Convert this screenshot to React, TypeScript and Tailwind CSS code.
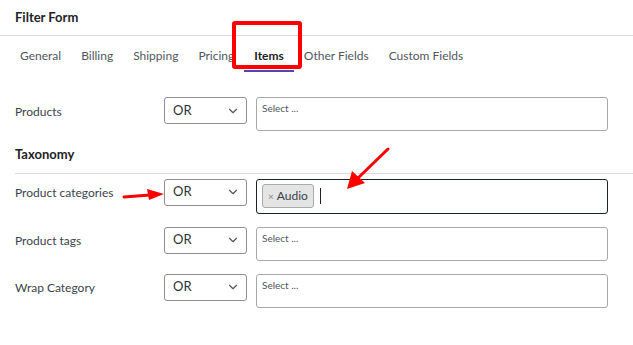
import { ChevronDown } from "lucide-react";

const tabs = ["General", "Billing", "Shipping", "Pricing", "Items", "Other Fields", "Custom Fields"];

const OrSelect = () => (
  <div className="w-[83px] h-[27px] shrink-0 border border-[#8c8f94] rounded-[3px] flex items-center justify-between pl-[8px] pr-[6px] text-[13px] text-[#2c3338]">
    <span>OR</span>
    <ChevronDown className="w-[14px] h-[14px] text-[#50575e]" strokeWidth={2} />
  </div>
);

const Row = ({ label, children, focused }: { label: string; children?: React.ReactNode; focused?: boolean }) => (
  <div className="flex items-start">
    <div className="w-[149px] shrink-0 h-[27px] pt-[2px] flex items-center text-[12px] text-[#3c434a]">{label}</div>
    <OrSelect />
    <div
      className={
        focused
          ? "ml-[9px] w-[352px] h-[35px] border-[1.5px] border-[#1d2327] rounded-[3px] flex items-center px-[5px]"
          : "ml-[9px] w-[352px] h-[34px] border border-[#a7aaad] rounded-[3px] px-[5px] pt-[3px] text-[10px] text-[#50575e]"
      }
    >
      {children ?? "Select ..."}
    </div>
  </div>
);

export default function App() {
  return (
    <div className="relative w-[633px] h-[345px] bg-white overflow-hidden font-['Lato',sans-serif]">
      <div className="h-[36px] border-b border-[#dcdcde] flex items-center px-[15px] text-[13px] font-bold text-[#1d2327]">
        Filter Form
      </div>

      <nav className="flex pl-[20px] gap-[20px] h-[36px] pt-[4px] items-center text-[12px] text-[#50575e]">
        {tabs.map((t) => (
          <div key={t} className={t === "Items" ? "relative flex items-center text-[#1d2327] font-bold" : "flex items-center"}>
            {t}
            {t === "Items" && <span className="absolute left-[-10px] right-[-10px] top-[23px] h-[2px] bg-[#5b3fb5]" />}
          </div>
        ))}
      </nav>

      <div className="px-[15px] pt-[25px] flex flex-col">
        <Row label="Products" />
        <div className="mt-[14px] pb-[8px] border-b border-[#dcdcde] mr-[-15px] text-[13px] font-bold text-[#1d2327]">Taxonomy</div>
        <div className="mt-[5px] flex flex-col gap-[13px]">
          <Row label="Product categories" focused>
            <div className="h-[24px] px-[5px] bg-[#e4e4e4] border border-[#aaa] rounded-[3px] flex items-center text-[12px] text-[#3c434a]">
              <span className="text-[#888] text-[10px] mr-[3px]">×</span>Audio
            </div>
            <span className="ml-[6px] w-px h-[16px] bg-[#1d2327]" />
          </Row>
          <Row label="Product tags" />
          <Row label="Wrap Category" />
        </div>
      </div>

      {/* annotation overlay */}
      <div className="absolute left-[232px] top-[21px] w-[70px] h-[48px] border-[4px] border-[#ff0000] rounded-[3px]" />
      <svg className="absolute left-0 top-0 pointer-events-none" width="633" height="345">
        <line x1="124" y1="197" x2="150" y2="195" stroke="#f00" strokeWidth="3" strokeLinecap="round" />
        <polygon points="164,194 147,189 149,200" fill="#f00" />
        <line x1="388" y1="149" x2="358" y2="178" stroke="#f00" strokeWidth="3" strokeLinecap="round" />
        <polygon points="347,189 352,171 365,183" fill="#f00" />
      </svg>
    </div>
  );
}
